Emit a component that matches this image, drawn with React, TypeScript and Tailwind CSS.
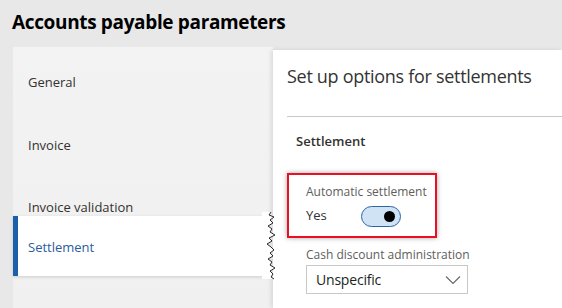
import React from "react";

const navItems = [
  { label: "General", box: "h-[62px] items-center" },
  { label: "Invoice", box: "h-[63px] items-center" },
  { label: "Invoice validation", box: "h-[40px] items-end" },
];

// jagged "torn paper" edge drawn over the selected nav item
const tornPoints: Array<[number, number]> = [
  [9, 0], [7, 3], [12, 5], [8, 8], [11, 11], [6, 14], [10, 17], [8, 20],
  [13, 23], [7, 26], [10, 29], [5, 32], [9, 35], [12, 38], [8, 41], [11, 44],
  [6, 47], [10, 50], [8, 53], [13, 56], [8, 59], [11, 62], [9, 65], [12, 67],
];

function TornEdge() {
  const line = tornPoints.map(([x, y]) => `${x},${y}`).join(" ");
  return (
    <svg
      className="absolute left-[262px] top-[212px] z-30"
      width="18"
      height="68"
      viewBox="0 0 18 68"
    >
      <polygon points={`0,0 ${line} 0,67`} fill="#ffffff" />
      <polyline points={line} fill="none" stroke="#2a2a2a" strokeWidth="1" />
    </svg>
  );
}

function Toggle() {
  return (
    <div className="w-[40px] h-[21px] rounded-full border border-[#2c64a8] bg-[#cfe3f5] flex items-center justify-end pr-[5px]">
      <div className="w-[11px] h-[11px] rounded-full bg-black" />
    </div>
  );
}

export default function App() {
  return (
    <div className="relative w-[562px] h-[308px] overflow-hidden bg-[#e8e8e8] flex flex-col font-['Open_Sans',sans-serif] text-[#323130]">
      {/* Page title */}
      <h1 className="h-[47px] pl-[12px] pt-[8px] text-[19px] leading-[28px] font-bold tracking-[-0.35px] text-black">
        Accounts payable parameters
      </h1>

      <div className="flex flex-1 min-h-0">
        {/* Left navigation */}
        <nav className="ml-[13px] w-[260px] bg-gradient-to-b from-[#f3f3f3] to-[#f0f0f0] pt-[4px]">
          {navItems.map((item) => (
            <div key={item.label} className={`flex pl-[15px] text-[13px] leading-[18px] ${item.box}`}>
              {item.label}
            </div>
          ))}
          <div className="w-[255px] h-[60px] flex items-center bg-white border-l-[5px] border-[#1b5faa] pl-[10px] pt-[3px] text-[13px] text-[#2b5c9e] shadow-[0_1px_3px_rgba(0,0,0,0.15)]">
            Settlement
          </div>
        </nav>

        {/* Content panel */}
        <main className="flex-1 mt-[3px] bg-white pl-[14px] shadow-[-2px_0_4px_rgba(0,0,0,0.1)] relative z-10">
          <div className="h-[66px] pt-[14px] text-[18px] leading-[24px] tracking-[-0.3px] text-[#333333]">
            Set up options for settlements
          </div>
          <div className="border-t border-[#c8c8c8]" />
          <div className="ml-[9px] mt-[15px] text-[13px] leading-[18px] font-semibold text-[#323130]">
            Settlement
          </div>

          {/* Highlighted field */}
          <div className="mt-[23px] w-[150px] h-[65px] border-2 border-[#e81123] shadow-[0_0_5px_rgba(0,0,0,0.35)] pl-[17px] pt-[9px]">
            <div className="text-[12px] leading-[16px] text-[#605e5c]">Automatic settlement</div>
            <div className="mt-[5px] flex items-center h-[22px]">
              <span className="w-[55px] text-[13px]">Yes</span>
              <Toggle />
            </div>
          </div>

          <div className="ml-[19px] mt-[9px] text-[12px] leading-[16px] text-[#605e5c]">
            Cash discount administration
          </div>
          <div className="ml-[19px] mt-[2px] w-[162px] h-[29px] border border-[#c8c8c8] flex items-center justify-between pl-[9px] pr-[6px] text-[14px] tracking-[-0.2px] text-[#201f1e]">
            <span>Unspecific</span>
            <svg width="16" height="10" viewBox="0 0 16 10" fill="none">
              <path d="M1 1.5 L8 8.5 L15 1.5" stroke="#666666" strokeWidth="1.1" />
            </svg>
          </div>
        </main>
      </div>

      <TornEdge />
    </div>
  );
}
